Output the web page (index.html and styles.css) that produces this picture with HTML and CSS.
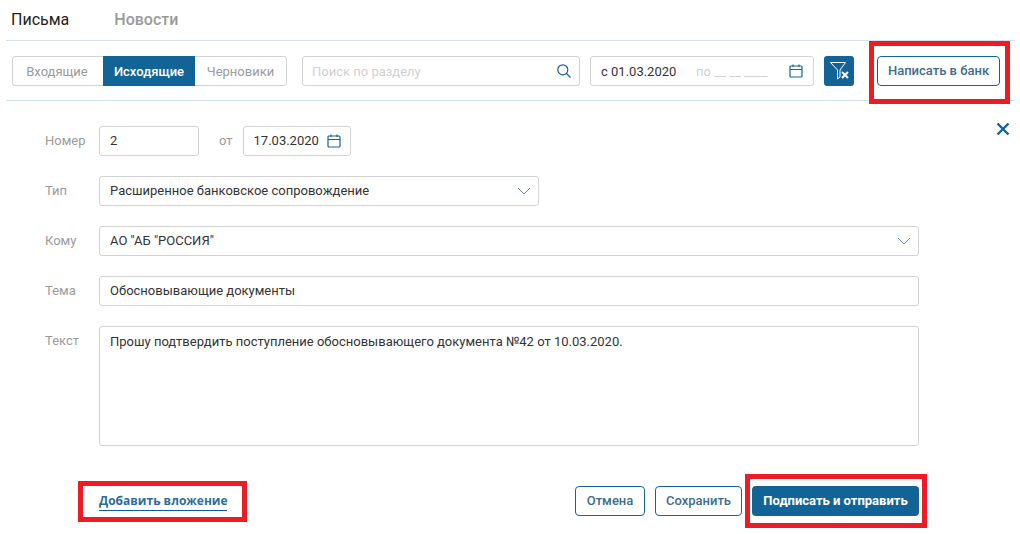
FILE: index.html
```html
<!DOCTYPE html>
<html lang="ru">
<head>
  <meta charset="UTF-8">
  <title>Письма</title>
  <link rel="stylesheet" href="styles.css">
</head>
<body>
  <nav class="tabs">
    <span class="tab tab-active">Письма</span>
    <span class="tab">Новости</span>
  </nav>

  <div class="toolbar">
    <div class="segments">
      <span class="segment segment-first">Входящие</span>
      <span class="segment segment-active">Исходящие</span>
      <span class="segment">Черновики</span>
    </div>
    <div class="field search">
      <span class="placeholder">Поиск по разделу</span>
      <svg class="icon" width="14" height="14" viewBox="0 0 14 14"><circle cx="5.8" cy="5.8" r="5"/><path d="M9.5 9.5L13.5 13.5"/></svg>
    </div>
    <div class="field period">
      <span class="period-from">с 01.03.2020</span>
      <span class="placeholder">по __ __ ____</span>
      <svg class="icon period-icon" width="14" height="14" viewBox="0 0 14 14"><rect x="1" y="2" width="12" height="11" rx="1"/><path d="M1 5.5H13M4 .5V3M10 .5V3"/></svg>
    </div>
    <button class="filter-btn">
      <svg width="30" height="30" viewBox="0 0 30 30"><path class="thin" d="M6.5 6.5H21.5L16 14V21L13.5 23V14Z"/><path class="thick" d="M18 16L24 22M24 16L18 22"/></svg>
    </button>
    <div class="marked marked-write">
      <button class="btn btn-outline btn-write">Написать в банк</button>
    </div>
  </div>

  <form class="letter">
    <svg class="close" width="14" height="14" viewBox="0 0 14 14"><path d="M1.5 1.5L12.5 12.5M12.5 1.5L1.5 12.5"/></svg>

    <div class="row">
      <span class="label">Номер</span>
      <div class="field number"><span>2</span></div>
      <span class="label-from">от</span>
      <div class="field date">
        <span>17.03.2020</span>
        <svg class="icon" width="14" height="14" viewBox="0 0 14 14"><rect x="1" y="2" width="12" height="11" rx="1"/><path d="M1 5.5H13M4 .5V3M10 .5V3"/></svg>
      </div>
    </div>

    <div class="row">
      <span class="label">Тип</span>
      <div class="field select type">
        <span>Расширенное банковское сопровождение</span>
        <svg class="chevron" width="14" height="8" viewBox="0 0 14 8"><path d="M1 1L7 7L13 1"/></svg>
      </div>
    </div>

    <div class="row">
      <span class="label">Кому</span>
      <div class="field select wide">
        <span>АО "АБ "РОССИЯ"</span>
        <svg class="chevron" width="14" height="8" viewBox="0 0 14 8"><path d="M1 1L7 7L13 1"/></svg>
      </div>
    </div>

    <div class="row">
      <span class="label">Тема</span>
      <div class="field wide"><span>Обосновывающие документы</span></div>
    </div>

    <div class="row">
      <span class="label label-top">Текст</span>
      <div class="field wide textarea">Прошу подтвердить поступление обосновывающего документа №42 от 10.03.2020.</div>
    </div>

    <div class="actions">
      <div class="marked marked-attach">
        <a class="attach">Добавить вложение</a>
      </div>
      <div class="buttons">
        <button type="button" class="btn btn-outline btn-cancel">Отмена</button>
        <button type="button" class="btn btn-outline btn-save">Сохранить</button>
        <div class="marked marked-send">
          <button type="button" class="btn btn-primary btn-send">Подписать и отправить</button>
        </div>
      </div>
    </div>
  </form>
</body>
</html>
```

FILE: styles.css
```css
:root {
  --primary-color: #136496;
  --border-color: #d2d2d2;
  --line-color: #d3e2ec;
  --muted-color: #9a9a9a;
  --mark-color: #ed1c24;
  --text-color: #333;
}
*, *::after {
  box-sizing: border-box;
}
body {
  margin: 0;
  height: 534px;
  overflow: hidden;
  background: #fff;
  font-family: Roboto, "Liberation Sans", sans-serif;
  font-size: 13px;
  color: var(--text-color);
}
.tabs {
  display: flex;
  height: 41px;
  margin: 0 5px 0 6px;
  padding: 11px 0 0 5px;
  gap: 45px;
  border-bottom: 1px solid var(--line-color);
}
.tab {
  font-size: 16px;
  line-height: 18px;
  font-weight: 500;
  color: var(--muted-color);
}
.tab-active {
  color: #222;
  font-weight: 400;
}
.toolbar {
  display: flex;
  align-items: center;
  height: 60px;
  margin: 0 5px 0 6px;
  padding: 1px 0 0 6px;
  border-bottom: 1px solid var(--line-color);
}
.segments {
  display: flex;
  width: 275px;
  height: 30px;
  border: 1px solid var(--border-color);
  border-radius: 3px;
  line-height: 29px;
  color: var(--muted-color);
  margin-right: 15px;
}
.segment {
  text-align: center;
  width: 91px;
}
.segment-first {
  width: 90px;
  padding-right: 2px;
}
.segment-active {
  width: 92px;
  height: 30px;
  margin-top: -1px;
  line-height: 31px;
  background: var(--primary-color);
  color: #fff;
  font-weight: 500;
}
.field {
  display: flex;
  align-items: center;
  height: 30px;
  padding: 0 10px;
  border: 1px solid var(--border-color);
  border-radius: 3px;
  background: #fff;
}
.field > span {
  margin-top: -2px;
}
.toolbar .field > span {
  margin-top: 0;
}
.placeholder {
  color: #d0d0d0;
}
.icon {
  flex: none;
  fill: none;
  stroke: var(--primary-color);
  stroke-width: 1.2;
}
.chevron {
  flex: none;
  fill: none;
  stroke: #5f89a8;
  stroke-width: 1;
}
.search {
  width: 278px;
  padding-left: 9px;
  justify-content: space-between;
  margin-right: 10px;
}
.search .icon {
  margin-right: -2px;
}
.period {
  width: 224px;
  margin-right: 10px;
}
.period-from {
  width: 95px;
}
.period-icon {
  margin-left: auto;
}
.filter-btn {
  display: block;
  width: 30px;
  height: 30px;
  padding: 0;
  border: none;
  border-radius: 3px;
  background: var(--primary-color);
}
.filter-btn svg {
  display: block;
  fill: none;
  stroke: #fff;
}
.filter-btn .thin {
  stroke-width: 1;
}
.filter-btn .thick {
  stroke-width: 2;
}
.btn {
  height: 30px;
  padding: 0 0 2px;
  border-radius: 4px;
  font-family: inherit;
  font-size: 13px;
  font-weight: 500;
}
.btn-outline {
  border: 1px solid var(--primary-color);
  background: #fff;
  color: #3f6c8d;
}
.btn-primary {
  border: none;
  background: var(--primary-color);
  color: #fff;
  font-weight: 700;
}
.btn-write {
  width: 123px;
}
.btn-cancel {
  width: 70px;
}
.btn-save {
  width: 87px;
}
.btn-send {
  width: 167px;
}
.marked {
  position: relative;
}
.marked::after {
  content: "";
  position: absolute;
  border: 5px solid var(--mark-color);
  pointer-events: none;
}
.marked-write {
  margin-left: 23px;
}
.marked-write::after {
  left: -8px;
  top: -15px;
  width: 141px;
  height: 63px;
}
.marked-attach::after {
  left: -21px;
  top: -5px;
  width: 169px;
  height: 41px;
}
.marked-send::after {
  left: -7px;
  top: -12px;
  width: 182px;
  height: 54px;
}
.letter {
  position: relative;
  padding-top: 25px;
}
.close {
  position: absolute;
  right: 10px;
  top: 21px;
  fill: none;
  stroke: var(--primary-color);
  stroke-width: 2.4;
}
.row {
  display: flex;
  align-items: center;
  margin-bottom: 20px;
  padding-left: 45px;
}
.label {
  width: 54px;
  margin-top: -2px;
  color: var(--muted-color);
}
.label-top {
  align-self: flex-start;
  margin-top: 0;
  padding-top: 7px;
}
.label-from {
  margin: -2px 10px 0 20px;
  color: var(--muted-color);
}
.number {
  width: 100px;
}
.date {
  width: 108px;
  justify-content: space-between;
}
.date .icon {
  margin-right: -1px;
}
.select {
  justify-content: space-between;
}
.select .chevron {
  margin-right: -3px;
}
.type {
  width: 440px;
}
.wide {
  width: 820px;
}
.textarea {
  align-items: flex-start;
  height: 120px;
  padding-top: 7px;
  line-height: 15px;
}
.actions {
  display: flex;
  justify-content: space-between;
  align-items: flex-start;
  width: 919px;
  margin-top: 40px;
  padding-left: 99px;
}
.attach {
  display: block;
  position: relative;
  width: 128px;
  height: 30px;
  padding-top: 6px;
  line-height: 18px;
  white-space: nowrap;
  font-family: "Open Sans", Roboto, sans-serif;
  font-size: 12px;
  font-weight: 700;
  color: #2d6b9a;
}
.attach::after {
  content: "";
  position: absolute;
  left: 0;
  right: 0;
  top: 24px;
  border-bottom: 1px solid #0b5f9e;
}
.buttons {
  display: flex;
  gap: 10px;
}
```
